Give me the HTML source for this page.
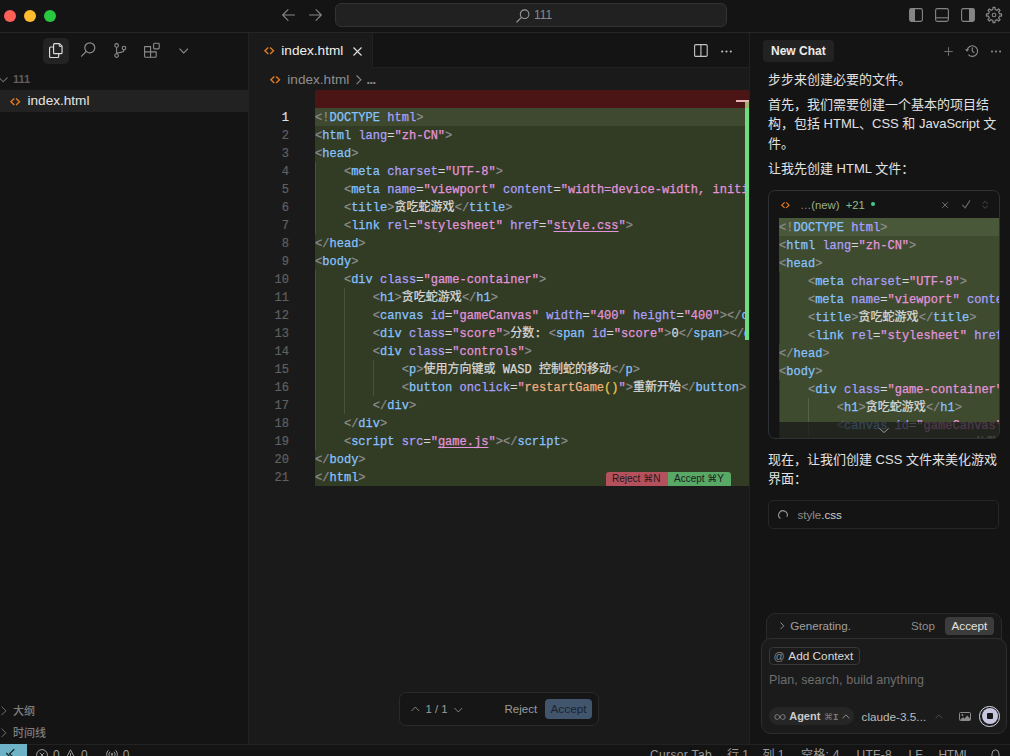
<!DOCTYPE html>
<html lang="zh-CN">
<head>
<meta charset="UTF-8">
<title>Cursor</title>
<style>
*{box-sizing:border-box;margin:0;padding:0}
html,body{width:1010px;height:756px;overflow:hidden;background:#141414}
body{position:relative;font-family:"Liberation Sans","Noto Sans CJK SC",sans-serif;font-size:13px;color:#d6d6d6}
.abs{position:absolute}
svg{display:block;overflow:visible;position:absolute}
.ic{fill:none;stroke:#9a9a9a;stroke-width:1.1;stroke-linecap:round;stroke-linejoin:round}
/* title bar */
#titlebar{left:0;top:0;width:1010px;height:33px;background:#141414;border-bottom:1px solid #262626}
.tl{position:absolute;top:10px;width:12px;height:12px;border-radius:50%}
#search{left:335px;top:3px;width:392px;height:24px;border:1px solid #333;border-radius:6px;background:#212121}
#search span{position:absolute;left:198px;top:4px;font-size:12px;color:#8a8a8a;line-height:14px}
/* sidebar */
#sidebar{left:0;top:33px;width:249px;height:711px;background:#141414;border-right:1px solid #222}
#actsel{left:43px;top:5px;width:26px;height:26px;border-radius:5px;background:#232323}
.row{position:absolute;left:0;width:248px;height:22px;line-height:22px;font-size:13px;white-space:nowrap}
.sec{font-size:11px;font-weight:bold;color:#808080;padding-left:13px}
/* editor */
#editor{left:249px;top:33px;width:500px;height:711px;background:#1a1a1a;overflow:hidden}
#tabbar{left:0;top:0;width:501px;height:35px;background:#141414;border-bottom:1px solid #222}
#tab{left:0;top:0;width:124px;height:35px;background:#1a1a1a;border-right:1px solid #222}
#crumbs{left:0;top:35px;width:501px;height:22px;background:#1a1a1a}
#code{left:0;top:57px;width:501px;height:420px}
.code,.cl,.ln{font-family:"Liberation Mono","Noto Sans CJK SC",monospace;font-size:12px;line-height:18px;white-space:pre;letter-spacing:0.025px;color:#d8d8d8}
.cl{height:18px;-webkit-text-stroke:0.25px}
.ln{position:absolute;left:0;margin-top:1px;width:40px;text-align:right;color:#606060;-webkit-text-stroke:0.2px}
.t{color:#87c3ff}.p{color:#8c8c8c}.a{color:#aaa0fa}.s{color:#e394dc}.w{color:#d6d6d6}.f{color:#efb080}.y{color:#ecc94b}
.u{text-decoration:underline;text-underline-offset:2px}
.guide{position:absolute;width:1px;background:#4a5040}
/* chat */
#chat{left:750px;top:33px;width:260px;height:711px;background:#141414;border-left:1px solid #141414}
#vsep{left:749px;top:33px;width:1px;height:711px;background:#212121}
.msg{position:absolute;left:17px;width:240px;font-size:13px;line-height:19.5px;color:#e2e2e2;white-space:nowrap}
/* status */
#status{left:0;top:744px;width:1010px;height:22px;background:#141414;border-top:1px solid #222;font-size:12px;color:#9a9a9a}
#status span{position:absolute;top:1.7px;line-height:16px;white-space:nowrap}
#cb{left:17px;top:156.5px;width:232px;height:249.5px;border:1px solid #2b3134;border-radius:7px;background:#141414;overflow:hidden}
#cbcode{left:10px;top:27.5px;width:220px;height:222px;overflow:hidden}
.k{font-family:"DejaVu Sans","Liberation Sans",sans-serif}
</style>
</head>
<body>
<!-- TITLE BAR -->
<div id="titlebar" class="abs">
  <div class="tl" style="left:4px;background:#fe5f57"></div>
  <div class="tl" style="left:24px;background:#febc2e"></div>
  <div class="tl" style="left:44px;background:#28c840"></div>
  <svg style="left:282px;top:9px" width="13" height="12" viewBox="0 0 13 12"><path class="ic" style="stroke:#858585" d="M12.5 6H0.7M6 0.7L0.7 6L6 11.3"/></svg>
  <svg style="left:308.5px;top:9px" width="13" height="12" viewBox="0 0 13 12"><path class="ic" style="stroke:#858585" d="M0.5 6H12.3M7 0.7L12.3 6L7 11.3"/></svg>
  <div id="search" class="abs">
    <svg style="left:180px;top:4.5px" width="14" height="14" viewBox="0 0 14 14"><circle class="ic" cx="8.6" cy="5.2" r="4.3"/><path class="ic" d="M5.5 8.3L0.8 13"/></svg>
    <span>111</span>
  </div>
  <svg style="left:909px;top:8px" width="14" height="14" viewBox="0 0 14 14"><rect x="0.6" y="0.6" width="12.8" height="12.8" rx="1.8" fill="none" stroke="#858585" stroke-width="1.1"/><path d="M0.6 2.4Q0.6 0.6 2.4 0.6H6V13.4H2.4Q0.6 13.4 0.6 11.6Z" fill="#858585"/></svg>
  <svg style="left:935px;top:8px" width="14" height="14" viewBox="0 0 14 14"><rect x="0.6" y="0.6" width="12.8" height="12.8" rx="1.8" fill="none" stroke="#858585" stroke-width="1.1"/><path d="M0.6 9.8H13.4" stroke="#858585" stroke-width="1.1"/></svg>
  <svg style="left:961px;top:8px" width="14" height="14" viewBox="0 0 14 14"><rect x="0.6" y="0.6" width="12.8" height="12.8" rx="1.8" fill="none" stroke="#858585" stroke-width="1.1"/><path d="M13.4 2.4Q13.4 0.6 11.6 0.6H8V13.4H11.6Q13.4 13.4 13.4 11.6Z" fill="#858585"/></svg>
  <svg style="left:986px;top:7px" width="16" height="16" viewBox="-8 -8 16 16"><path fill="none" stroke="#858585" stroke-width="1.25" stroke-linejoin="round" d="M-1.18 -5.47L-1.01 -7.53L1.01 -7.53L1.18 -5.47L3.04 -4.70L4.61 -6.04L6.04 -4.61L4.70 -3.04L5.47 -1.18L7.53 -1.01L7.53 1.01L5.47 1.18L4.70 3.04L6.04 4.61L4.61 6.04L3.04 4.70L1.18 5.47L1.01 7.53L-1.01 7.53L-1.18 5.47L-3.04 4.70L-4.61 6.04L-6.04 4.61L-4.70 3.04L-5.47 1.18L-7.53 1.01L-7.53 -1.01L-5.47 -1.18L-4.70 -3.04L-6.04 -4.61L-4.61 -6.04L-3.04 -4.70Z"/><circle cx="0" cy="0" r="1.8" fill="none" stroke="#858585" stroke-width="1.1"/></svg>
</div>
<!-- SIDEBAR -->
<div id="sidebar" class="abs">
  <div id="actsel" class="abs"></div>
  <!-- files -->
  <svg style="left:48.6px;top:10.2px" width="14" height="14.9" viewBox="0 0 15 16"><g fill="none" stroke="#dcdcdc" stroke-width="1.25" stroke-linejoin="round"><path d="M4.9 4.3H1.6Q0.6 4.3 0.6 5.3V14.6Q0.6 15.6 1.6 15.6H9.4Q10.4 15.6 10.4 14.6V11.4"/><path d="M5.9 0.6H11.2L14 3.4V10.4Q14 11.4 13 11.4H5.9Q4.9 11.4 4.9 10.4V1.6Q4.9 0.6 5.9 0.6Z"/><path d="M11 0.9V3.6H13.7" stroke-width="1"/></g></svg>
  <!-- search -->
  <svg style="left:81.2px;top:8.8px" width="15" height="15" viewBox="0 0 15 15"><circle cx="8.8" cy="5.8" r="5" fill="none" stroke="#8c8c8c" stroke-width="1.2"/><path d="M5.2 9.4L0.6 14.2" fill="none" stroke="#8c8c8c" stroke-width="1.2" stroke-linecap="round"/></svg>
  <!-- git -->
  <svg style="left:113.5px;top:10px" width="13" height="15" viewBox="0 0 13 15"><g fill="none" stroke="#8c8c8c" stroke-width="1.1"><circle cx="2.6" cy="2.4" r="1.8"/><circle cx="2.6" cy="12.6" r="1.8"/><circle cx="10" cy="5" r="1.8"/><path d="M2.6 4.2V10.8M10 6.8Q10 9.2 6.8 9.4Q3.4 9.6 2.8 10.8"/></g></svg>
  <!-- extensions -->
  <svg style="left:144px;top:9px" width="16" height="16" viewBox="0 0 16 16"><g fill="none" stroke="#8c8c8c" stroke-width="1.1" stroke-linejoin="round"><path d="M0.6 4.6H6.6V15.2H1.6Q0.6 15.2 0.6 14.2ZM0.6 9.9H12.2M6.6 9.9H12.2V14.2Q12.2 15.2 11.2 15.2H6.6"/><rect x="9.6" y="1.3" width="5.6" height="5.6" rx="0.9"/></g></svg>
  <!-- chevron -->
  <svg style="left:179.2px;top:15.2px" width="10" height="6" viewBox="0 0 10 6"><path d="M0.5 0.6L4.7 4.9L9 0.6" fill="none" stroke="#8c8c8c" stroke-width="1.1"/></svg>
  <svg style="left:-1px;top:44.3px" width="9" height="6" viewBox="0 0 9 6"><path d="M0 0.5L4.2 4.8L8.5 0.5" fill="none" stroke="#6a6a6a" stroke-width="1.1"/></svg>
  <div class="row sec" style="top:35px;color:#5e5e5e">111</div>
  <div class="row" style="top:57px;background:#222;color:#e4e4e4;padding-left:27.5px;font-size:13.6px">index.html</div>
  <svg style="left:9.8px;top:64.7px" width="10.4" height="7.4" viewBox="0 0 10.4 7.4"><path d="M4.3 0.4L0.9 3.7L4.3 7M6.1 0.4L9.5 3.7L6.1 7" fill="none" stroke="#e37a22" stroke-width="1.4"/></svg>
  <svg style="left:0.9px;top:673.3px" width="6" height="10" viewBox="0 0 6 10"><path d="M0.6 0.5L4.9 4.8L0.6 9.1" fill="none" stroke="#707070" stroke-width="1"/></svg>
  <svg style="left:0.9px;top:695.3px" width="6" height="10" viewBox="0 0 6 10"><path d="M0.6 0.5L4.9 4.8L0.6 9.1" fill="none" stroke="#707070" stroke-width="1"/></svg>
  <div class="row sec" style="top:667px;font-weight:500;color:#7e7e7e">大纲</div>
  <div class="row sec" style="top:689px;font-weight:500;color:#7e7e7e">时间线</div>
</div>
<!-- EDITOR -->
<div id="editor" class="abs">
  <div id="tabbar" class="abs">
    <div id="tab" class="abs">
      <svg style="left:14.8px;top:13.9px" width="10.4" height="7.4" viewBox="0 0 10.4 7.4"><path d="M4.3 0.4L0.9 3.7L4.3 7M6.1 0.4L9.5 3.7L6.1 7" fill="none" stroke="#e37a22" stroke-width="1.4"/></svg>
      <span class="abs" style="left:32.3px;top:10px;line-height:16px;color:#f0f0f0;font-size:13.6px;white-space:nowrap">index.html</span>
      <svg style="left:104.4px;top:13.6px" width="9" height="9" viewBox="0 0 9 9"><path d="M0.5 0.5L8.5 8.5M8.5 0.5L0.5 8.5" fill="none" stroke="#e0e0e0" stroke-width="1.1"/></svg>
    </div>
    <svg style="left:444.5px;top:11px" width="14" height="13" viewBox="0 0 14 13"><rect x="0.6" y="0.6" width="12.6" height="11.8" rx="1.2" fill="none" stroke="#c4c4c4" stroke-width="1.1"/><path d="M6.9 0.6V12.4" stroke="#c4c4c4" stroke-width="1.1"/></svg>
    <svg style="left:471.5px;top:16.5px" width="11" height="3" viewBox="0 0 11 3"><circle cx="1.2" cy="1.5" r="1.05" fill="#c4c4c4"/><circle cx="5.5" cy="1.5" r="1.05" fill="#c4c4c4"/><circle cx="9.8" cy="1.5" r="1.05" fill="#c4c4c4"/></svg>
  </div>
  <div id="crumbs" class="abs">
    <svg style="left:20.8px;top:7.9px" width="10.4" height="7.4" viewBox="0 0 10.4 7.4"><path d="M4.3 0.4L0.9 3.7L4.3 7M6.1 0.4L9.5 3.7L6.1 7" fill="none" stroke="#e37a22" stroke-width="1.4"/></svg>
    <span class="abs" style="left:38.3px;top:4px;line-height:16px;color:#8e8e8e;white-space:nowrap;font-size:13.6px">index.html</span>
    <svg style="left:107px;top:6.6px" width="6" height="10" viewBox="0 0 6 10"><path d="M0.6 0.5L4.9 4.8L0.6 9.1" fill="none" stroke="#8a8a8a" stroke-width="1.1"/></svg>
    <span class="abs" style="left:117.6px;top:4px;line-height:16px;color:#8e8e8e;white-space:nowrap;font-size:13px;letter-spacing:-0.6px;font-weight:bold">...</span>
  </div>
  <div id="code" class="abs">
    <div class="abs" style="left:66px;top:0;width:434px;height:18px;background:#4b1516"></div>
    <div class="abs" style="left:66px;top:18px;width:434px;height:18px;background:#3e492f"></div>
    <div class="abs" style="left:66px;top:36px;width:434px;height:360px;background:#323b24"></div>
    <div class="guide" style="left:66px;top:72px;height:72px"></div>
    <div class="guide" style="left:66px;top:180px;height:180px"></div>
    <div class="guide" style="left:95px;top:198px;height:126px"></div>
    <div class="guide" style="left:124px;top:270px;height:36px"></div>
<div class="ln" style="top:18px;color:#e0e0e0">1</div>
<div class="ln" style="top:36px">2</div>
<div class="ln" style="top:54px">3</div>
<div class="ln" style="top:72px">4</div>
<div class="ln" style="top:90px">5</div>
<div class="ln" style="top:108px">6</div>
<div class="ln" style="top:126px">7</div>
<div class="ln" style="top:144px">8</div>
<div class="ln" style="top:162px">9</div>
<div class="ln" style="top:180px">10</div>
<div class="ln" style="top:198px">11</div>
<div class="ln" style="top:216px">12</div>
<div class="ln" style="top:234px">13</div>
<div class="ln" style="top:252px">14</div>
<div class="ln" style="top:270px">15</div>
<div class="ln" style="top:288px">16</div>
<div class="ln" style="top:306px">17</div>
<div class="ln" style="top:324px">18</div>
<div class="ln" style="top:342px">19</div>
<div class="ln" style="top:360px">20</div>
<div class="ln" style="top:378px">21</div>
    <div class="abs" style="left:66px;top:19px;width:433px;overflow:hidden">
<div class="cl"><span class="p">&lt;!</span><span class="t">DOCTYPE</span> <span class="a">html</span><span class="p">&gt;</span></div>
<div class="cl"><span class="p">&lt;</span><span class="t">html</span> <span class="a">lang</span><span class="w">=</span><span class="s">"zh-CN"</span><span class="p">&gt;</span></div>
<div class="cl"><span class="p">&lt;</span><span class="t">head</span><span class="p">&gt;</span></div>
<div class="cl">    <span class="p">&lt;</span><span class="t">meta</span> <span class="a">charset</span><span class="w">=</span><span class="s">"UTF-8"</span><span class="p">&gt;</span></div>
<div class="cl">    <span class="p">&lt;</span><span class="t">meta</span> <span class="a">name</span><span class="w">=</span><span class="s">"viewport"</span> <span class="a">content</span><span class="w">=</span><span class="s">"width=device-width, initial-scale=1.0"</span><span class="p">&gt;</span></div>
<div class="cl">    <span class="p">&lt;</span><span class="t">title</span><span class="p">&gt;</span>贪吃蛇游戏<span class="p">&lt;/</span><span class="t">title</span><span class="p">&gt;</span></div>
<div class="cl">    <span class="p">&lt;</span><span class="t">link</span> <span class="a">rel</span><span class="w">=</span><span class="s">"stylesheet"</span> <span class="a">href</span><span class="w">=</span><span class="s">"</span><span class="s u">style.css</span><span class="s">"</span><span class="p">&gt;</span></div>
<div class="cl"><span class="p">&lt;/</span><span class="t">head</span><span class="p">&gt;</span></div>
<div class="cl"><span class="p">&lt;</span><span class="t">body</span><span class="p">&gt;</span></div>
<div class="cl">    <span class="p">&lt;</span><span class="t">div</span> <span class="a">class</span><span class="w">=</span><span class="s">"game-container"</span><span class="p">&gt;</span></div>
<div class="cl">        <span class="p">&lt;</span><span class="t">h1</span><span class="p">&gt;</span>贪吃蛇游戏<span class="p">&lt;/</span><span class="t">h1</span><span class="p">&gt;</span></div>
<div class="cl">        <span class="p">&lt;</span><span class="t">canvas</span> <span class="a">id</span><span class="w">=</span><span class="s">"gameCanvas"</span> <span class="a">width</span><span class="w">=</span><span class="s">"400"</span> <span class="a">height</span><span class="w">=</span><span class="s">"400"</span><span class="p">&gt;</span><span class="p">&lt;/</span><span class="t">canvas</span><span class="p">&gt;</span></div>
<div class="cl">        <span class="p">&lt;</span><span class="t">div</span> <span class="a">class</span><span class="w">=</span><span class="s">"score"</span><span class="p">&gt;</span>分数: <span class="p">&lt;</span><span class="t">span</span> <span class="a">id</span><span class="w">=</span><span class="s">"score"</span><span class="p">&gt;</span>0<span class="p">&lt;/</span><span class="t">span</span><span class="p">&gt;</span><span class="p">&lt;/</span><span class="t">div</span><span class="p">&gt;</span></div>
<div class="cl">        <span class="p">&lt;</span><span class="t">div</span> <span class="a">class</span><span class="w">=</span><span class="s">"controls"</span><span class="p">&gt;</span></div>
<div class="cl">            <span class="p">&lt;</span><span class="t">p</span><span class="p">&gt;</span>使用方向键或 WASD 控制蛇的移动<span class="p">&lt;/</span><span class="t">p</span><span class="p">&gt;</span></div>
<div class="cl">            <span class="p">&lt;</span><span class="t">button</span> <span class="a">onclick</span><span class="w">=</span><span class="s">"</span><span class="f">restartGame</span><span class="y">()</span><span class="s">"</span><span class="p">&gt;</span>重新开始<span class="p">&lt;/</span><span class="t">button</span><span class="p">&gt;</span></div>
<div class="cl">        <span class="p">&lt;/</span><span class="t">div</span><span class="p">&gt;</span></div>
<div class="cl">    <span class="p">&lt;/</span><span class="t">div</span><span class="p">&gt;</span></div>
<div class="cl">    <span class="p">&lt;</span><span class="t">script</span> <span class="a">src</span><span class="w">=</span><span class="s">"</span><span class="s u">game.js</span><span class="s">"</span><span class="p">&gt;</span><span class="p">&lt;/</span><span class="t">script</span><span class="p">&gt;</span></div>
<div class="cl"><span class="p">&lt;/</span><span class="t">body</span><span class="p">&gt;</span></div>
<div class="cl"><span class="p">&lt;/</span><span class="t">html</span><span class="p">&gt;</span></div>
    </div>
    <div class="abs" style="left:487px;top:10px;width:13px;height:2px;background:#e8b4b8"></div>
    <div class="abs" style="left:496px;top:12px;width:4px;height:6px;background:#9ab46c"></div>
    <div class="abs" style="left:496px;top:18px;width:4px;height:232px;background:#70dc80"></div>
    <!-- inline reject/accept -->
    <div class="abs" style="left:357px;top:382px;width:62px;height:14px;background:#b5505d;border-radius:3px 0 0 0"></div>
    <div class="abs" style="left:419px;top:382px;width:63px;height:14px;background:#58a866;border-radius:0 3px 0 0"></div>
    <span class="abs" style="left:363px;top:383px;font-size:10px;line-height:12px;color:#1c1c1c;white-space:nowrap">Reject <span class="k">⌘</span>N</span>
    <span class="abs" style="left:425px;top:383px;font-size:10px;line-height:12px;color:#1c1c1c;white-space:nowrap">Accept <span class="k">⌘</span>Y</span>
  </div>
  <!-- bottom widget -->
  <div class="abs" style="left:150px;top:659px;width:200px;height:34px;border:1px solid #2a2a2a;border-radius:7px;background:#161616"></div>
  <svg style="left:161.5px;top:672.5px" width="9" height="6" viewBox="0 0 9 6"><path d="M0.5 5L4.3 1L8.1 5" fill="none" stroke="#808080" stroke-width="1"/></svg>
  <span class="abs" style="left:176.5px;top:668px;font-size:11.4px;line-height:16px;color:#9c9c9c;white-space:nowrap">1 / 1</span>
  <svg style="left:205px;top:673.5px" width="9" height="6" viewBox="0 0 9 6"><path d="M0.5 1L4.3 5L8.1 1" fill="none" stroke="#808080" stroke-width="1"/></svg>
  <span class="abs" style="left:255.5px;top:668px;font-size:11.5px;line-height:16px;color:#9c9c9c;white-space:nowrap">Reject</span>
  <div class="abs" style="left:296px;top:666px;width:47px;height:20px;border-radius:4px;background:#41556c"></div>
  <span class="abs" style="left:301.5px;top:668px;font-size:11.8px;line-height:16px;color:#1b2531;white-space:nowrap">Accept</span>
</div>
<div id="vsep" class="abs"></div>
<!-- CHAT -->
<div id="chat" class="abs">
  <div class="abs" style="left:11.5px;top:7px;width:71px;height:22px;border-radius:4px;background:#222"></div>
  <span class="abs" style="left:20px;top:10px;font-size:12px;font-weight:bold;line-height:16px;color:#ececec;white-space:nowrap">New Chat</span>
  <svg style="left:192.5px;top:13.5px" width="9" height="9" viewBox="0 0 9 9"><path d="M4.5 0.2V8.8M0.2 4.5H8.8" stroke="#6c6c6c" stroke-width="1.1" fill="none"/></svg>
  <svg style="left:213.9px;top:12.2px" width="13" height="12" viewBox="0 0 13 12"><g fill="none" stroke="#8a8a8a" stroke-width="1.1"><path d="M2.1 5.2A5.3 5.3 0 1 1 3.4 9.6"/><path d="M7.3 2.8V6.2L9 7.6" stroke-linecap="round"/></g><path d="M0 4.2H4.2L2.1 6.8Z" fill="#8a8a8a"/></svg>
  <svg style="left:240px;top:16.6px" width="11" height="3" viewBox="0 0 11 3"><rect x="0.1" y="0.6" width="1.8" height="1.8" fill="#8a8a8a"/><rect x="4.1" y="0.6" width="1.8" height="1.8" fill="#8a8a8a"/><rect x="8.2" y="0.6" width="1.8" height="1.8" fill="#8a8a8a"/></svg>
  <div class="msg" style="top:37px">步步来创建必要的文件。</div>
  <div class="msg" style="top:61.6px">首先，我们需要创建一个基本的项目结<br>构，包括 HTML、CSS 和 JavaScript 文<br>件。</div>
  <div class="msg" style="top:126px">让我先创建 HTML 文件：</div>
  <!-- code block -->
  <div id="cb" class="abs">
    <svg style="left:12.4px;top:11.2px" width="8.8" height="6.26154" viewBox="0 0 10.4 7.4"><path d="M4.3 0.4L0.9 3.7L4.3 7M6.1 0.4L9.5 3.7L6.1 7" fill="none" stroke="#e37a22" stroke-width="1.4"/></svg>
    <span class="abs" style="left:31px;top:6.2px;font-size:11.3px;line-height:16px;white-space:nowrap;color:#8a8a8a">…<span style="color:#9cb08c">(new)</span> <span style="color:#8fbf84;margin-left:3px">+21</span></span>
    <div class="abs" style="left:102px;top:11.3px;width:4.4px;height:4.4px;border-radius:50%;background:#3ecf8e"></div>
    <svg style="left:173px;top:11.6px" width="6.2" height="6.2" viewBox="0 0 7 7"><path d="M0.4 0.4L6.6 6.6M6.6 0.4L0.4 6.6" stroke="#7a7a7a" stroke-width="1" fill="none"/></svg>
    <svg style="left:192.8px;top:9.8px" width="8.4" height="8.4" viewBox="0 0 9 9"><path d="M0.4 5.2L3.4 8.4L8.6 0.4" stroke="#6a6a6a" stroke-width="1.1" fill="none"/></svg>
    <svg style="left:212.9px;top:10.6px" width="6.3" height="7.8" viewBox="0 0 7 9"><path d="M0.4 3.2L3.5 0.4L6.6 3.2M0.4 5.6L3.5 8.4L6.6 5.6" stroke="#505050" stroke-width="1" fill="none"/></svg>
    <div id="cbcode" class="abs">
      <div class="abs" style="left:0;top:0;width:220px;height:18px;background:#4a583a"></div>
      <div class="abs" style="left:0;top:18px;width:220px;height:220px;background:#3e4b2f"></div>
      <div class="guide" style="left:0;top:54px;height:72px;background:#2c3522"></div>
      <div class="guide" style="left:0;top:162px;height:72px;background:#2c3522"></div>
      <div class="guide" style="left:29px;top:180px;height:54px;background:#566248"></div>
      <div class="abs" style="left:0;top:1px;width:220px">
<div class="cl"><span class="p">&lt;!</span><span class="t">DOCTYPE</span> <span class="a">html</span><span class="p">&gt;</span></div>
<div class="cl"><span class="p">&lt;</span><span class="t">html</span> <span class="a">lang</span><span class="w">=</span><span class="s">"zh-CN"</span><span class="p">&gt;</span></div>
<div class="cl"><span class="p">&lt;</span><span class="t">head</span><span class="p">&gt;</span></div>
<div class="cl">    <span class="p">&lt;</span><span class="t">meta</span> <span class="a">charset</span><span class="w">=</span><span class="s">"UTF-8"</span><span class="p">&gt;</span></div>
<div class="cl">    <span class="p">&lt;</span><span class="t">meta</span> <span class="a">name</span><span class="w">=</span><span class="s">"viewport"</span> <span class="a">content</span><span class="w">=</span><span class="s">"width=device-width, initial-scale=1.0"</span><span class="p">&gt;</span></div>
<div class="cl">    <span class="p">&lt;</span><span class="t">title</span><span class="p">&gt;</span>贪吃蛇游戏<span class="p">&lt;/</span><span class="t">title</span><span class="p">&gt;</span></div>
<div class="cl">    <span class="p">&lt;</span><span class="t">link</span> <span class="a">rel</span><span class="w">=</span><span class="s">"stylesheet"</span> <span class="a">href</span><span class="w">=</span><span class="s">"</span><span class="s u">style.css</span><span class="s">"</span><span class="p">&gt;</span></div>
<div class="cl"><span class="p">&lt;/</span><span class="t">head</span><span class="p">&gt;</span></div>
<div class="cl"><span class="p">&lt;</span><span class="t">body</span><span class="p">&gt;</span></div>
<div class="cl">    <span class="p">&lt;</span><span class="t">div</span> <span class="a">class</span><span class="w">=</span><span class="s">"game-container"</span><span class="p">&gt;</span></div>
<div class="cl">        <span class="p">&lt;</span><span class="t">h1</span><span class="p">&gt;</span>贪吃蛇游戏<span class="p">&lt;/</span><span class="t">h1</span><span class="p">&gt;</span></div>
<div class="cl">        <span class="p">&lt;</span><span class="t">canvas</span> <span class="a">id</span><span class="w">=</span><span class="s">"gameCanvas"</span> <span class="a">width</span><span class="w">=</span><span class="s">"400"</span> <span class="a">height</span><span class="w">=</span><span class="s">"400"</span><span class="p">&gt;</span><span class="p">&lt;/</span><span class="t">canvas</span><span class="p">&gt;</span></div>
<div class="cl">        <span class="p">&lt;</span><span class="t">div</span> <span class="a">class</span><span class="w">=</span><span class="s">"score"</span><span class="p">&gt;</span>分数: <span class="p">&lt;</span><span class="t">span</span> <span class="a">id</span><span class="w">=</span><span class="s">"score"</span><span class="p">&gt;</span>0<span class="p">&lt;/</span><span class="t">span</span><span class="p">&gt;</span><span class="p">&lt;/</span><span class="t">div</span><span class="p">&gt;</span></div>
      </div>
      <div class="abs" style="left:0;top:204px;width:220px;height:18px;background:rgba(24,24,24,0.74)"></div>
      <svg style="left:99.5px;top:210px" width="10" height="5" viewBox="0 0 10 5"><path d="M0.3 0.3L5 4.5L9.7 0.3" stroke="#a8a8a8" stroke-width="0.9" fill="none"/></svg>
    </div>
  </div>
  <div class="msg" style="top:416.7px">现在，让我们创建 CSS 文件来美化游戏<br>界面：</div>
  <!-- file chip -->
  <div class="abs" style="left:17px;top:467px;width:231px;height:28.5px;border:1px solid #272727;border-radius:5px"></div>
  <svg style="left:27.2px;top:476.6px" width="10" height="10" viewBox="-5 -5 10 10"><path d="M-2.6 3.5A4.3 4.3 0 1 1 3.9 1.8" stroke="#9a9a9a" stroke-width="1.1" fill="none"/></svg>
  <span class="abs" style="left:46.4px;top:474px;font-size:11.6px;line-height:16px;color:#8c8c8c;white-space:nowrap">style<span style="color:#d0d0d0">.css</span></span>
  <!-- generating bar -->
  <div class="abs" style="left:15px;top:580px;width:235.5px;height:34px;border:1px solid #2a2a2a;border-radius:9px;background:#191919"></div>
  <svg style="left:28.5px;top:589.4px" width="5" height="8" viewBox="0 0 5 8"><path d="M0.5 0.5L3.8 3.8L0.5 7.1" stroke="#8a8a8a" stroke-width="1" fill="none"/></svg>
  <span class="abs" style="left:39.3px;top:585px;font-size:11.6px;line-height:16px;color:#a0a0a0;white-space:nowrap">Generating.</span>
  <span class="abs" style="left:160px;top:585px;font-size:11.6px;line-height:16px;color:#8e8e8e;white-space:nowrap">Stop</span>
  <div class="abs" style="left:194px;top:584px;width:49px;height:18px;border-radius:4px;background:#3c3c3c"></div>
  <span class="abs" style="left:200.5px;top:585px;font-size:11.7px;line-height:16px;color:#e2e2e2;white-space:nowrap">Accept</span>
  <!-- input -->
  <div class="abs" style="left:10px;top:605px;width:246px;height:95.5px;border:1px solid #2e2e2e;border-radius:10px;background:#1b1b1b"></div>
  <div class="abs" style="left:18px;top:614px;width:91px;height:18px;border:1px solid #383838;border-radius:4px"></div>
  <span class="abs" style="left:22.5px;top:614.5px;font-size:11px;line-height:16px;color:#8a8a8a;white-space:nowrap">@</span>
  <span class="abs" style="left:37.3px;top:615px;font-size:11.8px;line-height:16px;color:#dadada;white-space:nowrap">Add Context</span>
  <span class="abs" style="left:18px;top:639px;font-size:12.5px;line-height:16px;color:#6e6e6e;white-space:nowrap;letter-spacing:0.05px">Plan, search, build anything</span>
  <div class="abs" style="left:18px;top:674px;width:85px;height:18px;border-radius:9px;background:#262626"></div>
  <svg style="left:24px;top:680.5px" width="10" height="6" viewBox="0 0 10 6"><path d="M5 3C3.8 1 3 0.6 2.2 0.6A2.2 2.2 0 0 0 2.2 5.4C3 5.4 3.8 5 5 3C6.2 1 7 0.6 7.8 0.6A2.2 2.2 0 0 1 7.8 5.4C7 5.4 6.2 5 5 3Z" stroke="#8a8a8a" stroke-width="0.9" fill="none"/></svg>
  <span class="abs" style="left:38.2px;top:675px;font-size:11px;font-weight:bold;line-height:16px;color:#cacaca;white-space:nowrap">Agent</span>
  <span class="abs" style="left:73px;top:676px;font-size:9px;line-height:16px;color:#7c7c7c;white-space:nowrap"><span class="k">⌘</span><span style="font-family:'Liberation Mono',monospace;font-weight:bold">I</span></span>
  <svg style="left:90.5px;top:680.5px" width="8" height="5" viewBox="0 0 8 5"><path d="M0.5 4.4L3.9 0.8L7.3 4.4" stroke="#8a8a8a" stroke-width="1" fill="none"/></svg>
  <span class="abs" style="left:110.5px;top:675.6px;font-size:11.75px;line-height:16px;color:#bcbcbc;white-space:nowrap">claude-3.5...</span>
  <svg style="left:184px;top:680.5px" width="8" height="5" viewBox="0 0 8 5"><path d="M0.5 4.4L3.9 0.8L7.3 4.4" stroke="#484848" stroke-width="1" fill="none"/></svg>
  <svg style="left:208.3px;top:679px" width="12" height="9" viewBox="0 0 12 9"><rect x="0.5" y="0.5" width="11" height="8" rx="1" fill="none" stroke="#8a8a8a" stroke-width="1"/><circle cx="3.4" cy="3" r="1" fill="#8a8a8a"/><path d="M1 7.8L4 5.2L5.6 6.4L8.2 3.6L11 6.6V8H1Z" fill="#8a8a8a"/></svg>
  <div class="abs" style="left:228.4px;top:673px;width:20.6px;height:20.6px;border-radius:50%;border:1.3px solid #dcdcec"></div>
  <div class="abs" style="left:230.7px;top:675.3px;width:16px;height:16px;border-radius:50%;background:#c6c6de"></div>
  <div class="abs" style="left:235.6px;top:680.2px;width:6.2px;height:6.2px;border-radius:1px;background:#161616"></div>
</div>
<!-- STATUS -->
<div id="status" class="abs">
  <div class="abs" style="left:0;top:-1px;width:27px;height:23px;background:#6eb2c8"></div>
  <svg style="left:0;top:0" width="27" height="12" viewBox="0 0 27 12"><path d="M14.3 4.3L9.6 8.8L12.4 11.5M6.2 8L9.8 11.6" fill="none" stroke="#15252b" stroke-width="1.2"/></svg>
  <svg style="left:36.2px;top:3.8px" width="12" height="12" viewBox="0 0 12 12"><circle cx="6" cy="6" r="5.4" fill="none" stroke="#9a9a9a" stroke-width="1"/><path d="M3.8 3.8L8.2 8.2M8.2 3.8L3.8 8.2" stroke="#9a9a9a" stroke-width="1"/></svg>
  <span style="left:53px">0</span>
  <svg style="left:64.8px;top:3.8px" width="11" height="11" viewBox="0 0 11 11"><path d="M5.5 0.8L10.4 10.2H0.6Z" fill="none" stroke="#9a9a9a" stroke-width="1" stroke-linejoin="round"/><path d="M5.5 4V7M5.5 8.2V9" stroke="#9a9a9a" stroke-width="1"/></svg>
  <span style="left:81px">0</span>
  <svg style="left:106px;top:3.8px" width="12" height="12" viewBox="0 0 12 12"><g fill="none" stroke="#9a9a9a" stroke-width="1"><path d="M2.4 1.2Q0.6 3 0.6 5.2Q0.6 7.4 2.4 9.2M9.6 1.2Q11.4 3 11.4 5.2Q11.4 7.4 9.6 9.2M4 2.8Q2.9 3.9 2.9 5.2Q2.9 6.5 4 7.6M8 2.8Q9.1 3.9 9.1 5.2Q9.1 6.5 8 7.6M6 5.5V11"/><circle cx="6" cy="5" r="0.8"/></g></svg>
  <span style="left:122.8px">0</span>
  <span style="left:650px;letter-spacing:0.35px">Cursor Tab</span>
  <span style="left:727px">行 1,</span>
  <span style="left:762.4px">列 1</span>
  <span style="left:801px;letter-spacing:0.25px">空格: 4</span>
  <span style="left:856.5px;letter-spacing:0.3px">UTF-8</span>
  <span style="left:908.5px">LF</span>
  <span style="left:938.5px;letter-spacing:-0.3px">HTML</span>
  <svg style="left:990px;top:3.8px" width="11" height="12" viewBox="0 0 11 12"><path d="M5.5 0.8Q9 1 9 5V8L10.3 9.8H0.7L2 8V5Q2 1 5.5 0.8ZM4.3 10.2Q5.5 12 6.7 10.2" fill="none" stroke="#9a9a9a" stroke-width="1"/></svg>
</div>
</body>
</html>
